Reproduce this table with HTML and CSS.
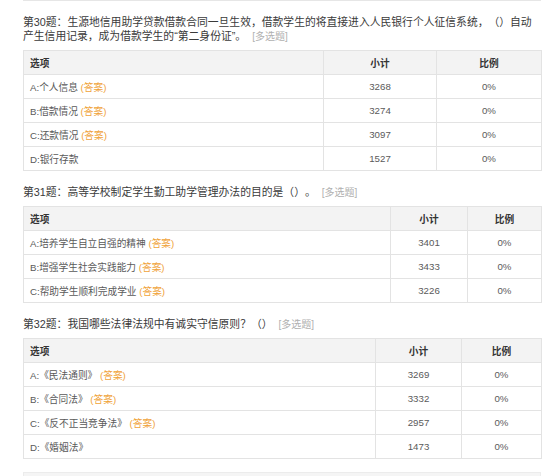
FILE: index.html
```html
<!DOCTYPE html>
<html lang="zh-CN">
<head>
<meta charset="utf-8">
<title>统计结果</title>
<link rel="stylesheet" href="styles.css">
</head>
<body>
<div class="page">
  <div class="prev-end"></div>

  <div class="question">
    <div class="q-title"><span class="q-text">第30题：生源地信用助学贷款借款合同一旦生效，借款学生的将直接进入人民银行个人征信系统，（）自动产生信用记录，成为借款学生的“第二身份证”。</span><span class="q-type">[多选题]</span></div>
    <table class="stat t30">
      <colgroup><col class="c-opt"><col class="c-sum"><col class="c-pct"></colgroup>
      <thead><tr><th class="left">选项</th><th>小计</th><th>比例</th></tr></thead>
      <tbody>
        <tr><td class="left">A:个人信息 <span class="ans">(答案)</span></td><td>3268</td><td>0%</td></tr>
        <tr><td class="left">B:借款情况 <span class="ans">(答案)</span></td><td>3274</td><td>0%</td></tr>
        <tr><td class="left">C:还款情况 <span class="ans">(答案)</span></td><td>3097</td><td>0%</td></tr>
        <tr><td class="left">D:银行存款</td><td>1527</td><td>0%</td></tr>
      </tbody>
    </table>
  </div>

  <div class="question">
    <div class="q-title"><span class="q-text">第31题：高等学校制定学生勤工助学管理办法的目的是（）。</span><span class="q-type">[多选题]</span></div>
    <table class="stat t31">
      <colgroup><col class="c-opt"><col class="c-sum"><col class="c-pct"></colgroup>
      <thead><tr><th class="left">选项</th><th>小计</th><th>比例</th></tr></thead>
      <tbody>
        <tr><td class="left">A:培养学生自立自强的精神 <span class="ans">(答案)</span></td><td>3401</td><td>0%</td></tr>
        <tr><td class="left">B:增强学生社会实践能力 <span class="ans">(答案)</span></td><td>3433</td><td>0%</td></tr>
        <tr><td class="left">C:帮助学生顺利完成学业 <span class="ans">(答案)</span></td><td>3226</td><td>0%</td></tr>
      </tbody>
    </table>
  </div>

  <div class="question">
    <div class="q-title"><span class="q-text">第32题：我国哪些法律法规中有诚实守信原则？（）</span><span class="q-type">[多选题]</span></div>
    <table class="stat t32">
      <colgroup><col class="c-opt"><col class="c-sum"><col class="c-pct"></colgroup>
      <thead><tr><th class="left">选项</th><th>小计</th><th>比例</th></tr></thead>
      <tbody>
        <tr><td class="left">A:《民法通则》 <span class="ans">(答案)</span></td><td>3269</td><td>0%</td></tr>
        <tr><td class="left">B:《合同法》 <span class="ans">(答案)</span></td><td>3332</td><td>0%</td></tr>
        <tr><td class="left">C:《反不正当竞争法》 <span class="ans">(答案)</span></td><td>2957</td><td>0%</td></tr>
        <tr><td class="left">D:《婚姻法》</td><td>1473</td><td>0%</td></tr>
      </tbody>
    </table>
  </div>

  <div class="next-start"></div>
</div>
</body>
</html>
```

FILE: styles.css
```css
html, body {
  margin: 0;
  padding: 0;
  background: #ffffff;
}

body {
  font-family: "Liberation Sans", "Noto Sans CJK SC", sans-serif;
  color: #333333;
  text-spacing-trim: space-all;
}

.page {
  padding: 0 13px 0 23px;
  height: 476px;
  overflow: hidden;
}

.prev-end {
  height: 1px;
  background: #e6e6e6;
}

.question {
  margin-top: 14px;
}

.q-title {
  font-size: 10.8px;
  line-height: 14px;
  color: #3a3a3a;
  margin-bottom: 6px;
}

.q-type {
  font-size: 10px;
  color: #b0b0b0;
  margin-left: 6px;
}

.stat {
  width: 100%;
  border-collapse: collapse;
  table-layout: fixed;
  font-size: 9.7px;
}

.stat th,
.stat td {
  border: 1px solid #e3e3e3;
  height: 23px;
  padding: 0 6px;
  text-align: center;
  vertical-align: middle;
  white-space: nowrap;
}

.stat th {
  background: #f3f3f3;
  font-weight: bold;
  color: #333333;
}

.stat td {
  color: #5a5a5a;
}

.stat .left {
  text-align: left;
}

.ans {
  color: #f0a33a;
}

.t30 .c-opt { width: 300px; }
.t30 .c-sum { width: 113px; }
.t30 .c-pct { width: 105px; }

.t31 .c-opt { width: 367px; }
.t31 .c-sum { width: 77px; }
.t31 .c-pct { width: 74px; }

.t32 .c-opt { width: 352px; }
.t32 .c-sum { width: 86px; }
.t32 .c-pct { width: 80px; }

.next-start {
  margin-top: 13px;
  height: 40px;
  background: #f5f5f5;
  border: 1px solid #ececec;
}
```
